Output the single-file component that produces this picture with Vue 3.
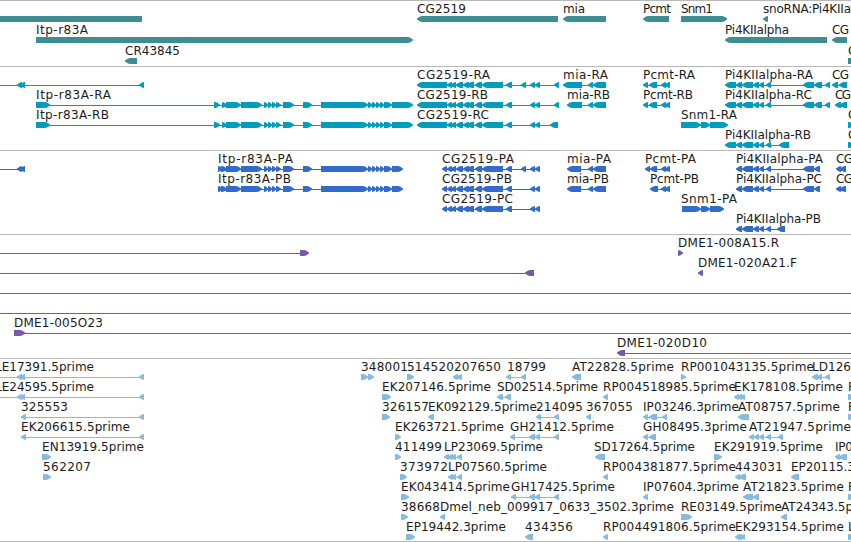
<template>
  <div class="browser">
    <section v-for="track in tracks" :key="track.name" :class="['track', track.name]">
      <svg class="canvas" width="851" :height="track.height">
        <g
          v-for="(item, index) in track.items"
          :key="index"
          :transform="`translate(0 ${item.row * track.pitch})`"
        >
          <rect v-if="item.line" class="intron" :x="item.line[0]" y="18" :width="item.line[1] - item.line[0]" height="1" />
          <path class="exon" :d="item.path" />
          <text v-if="item.label" class="label" :x="item.x" y="12" :textLength="item.length">{{ item.label }}</text>
        </g>
      </svg>
    </section>
  </div>
</template>

<script setup>
const HEAD = 5

// one exon: a box with a blunt pointed end on the side of its strand
const exonPath = (start, end, strand) => {
  const head = Math.min(HEAD, end - start)
  if (strand === '-') {
    return `M${start} 17.6L${start + head - 2} 15.6L${start + head} 15H${end}V21H${start + head}L${start + head - 2} 20.4L${start} 18.4Z`
  }
  if (strand === '+') {
    return `M${start} 15H${end - head}L${end - head + 2} 15.6L${end} 17.6V18.4L${end - head + 2} 20.4L${end - head} 21H${start}Z`
  }
  return `M${start} 15H${end}V21H${start}Z`
}

// labelEnd 0 keeps the natural width of the label
const feature = (row, label, x, labelEnd, strand, exonText, line) => {
  const exons = exonText ? exonText.split(' ').map(e => e.split('_').map(Number)) : []
  const auto = exons.length > 1 ? [exons[0][0] + 2, exons[exons.length - 1][1] - 1] : null
  return {
    row,
    label,
    x,
    length: labelEnd ? labelEnd - x : null,
    line: line || auto,
    path: exons.map(([start, end]) => exonPath(start, end, strand)).join('')
  }
}

const itpMiddle = '226_241 241_262 264_268 268_272 272_276 276_281 283_294 303_312 321_368 368_372 372_376 376_380 380_384 384_392'
const itpRna = `36_50 214_220 222_227 ${itpMiddle} 392_413`
const itpProtein = `218_222 221_227 ${itpMiddle} 392_403`
const cgMiddle = '447_452 451_456 456_463 463_469 467_474 475_482 482_503 506_512'
const piMiddle = '736_742 742_753 753_759 759_764 766_771'

const genes = [
  feature(0, '', 0, 0, '', '0_142'),
  feature(0, 'CG2519', 417, 466, '-', '417_558'),
  feature(0, 'mia', 563, 585, '-', '563_606'),
  feature(0, 'Pcmt', 643, 671, '-', '643_669'),
  feature(0, 'Snm1', 681, 713, '+', '681_727'),
  feature(0, 'snoRNA:Pi4KIIa', 763, 851, '-', '763_768'),
  feature(1, 'Itp-r83A', 36, 88, '+', '36_413'),
  feature(1, 'Pi4KIIalpha', 725, 789, '-', '725_827'),
  feature(1, 'CG', 832, 849, '-', '832_847'),
  feature(2, 'CR43845', 125, 180, '-', '125_137'),
  feature(2, 'C', 848, 0, '', '848_851')
]

const transcripts = [
  feature(0, '', 0, 0, '-', '17_22 20_25 139_144', [0, 142]),
  feature(0, 'CG2519-RA', 417, 490, '-', `417_447 ${cgMiddle} 521_526 530_535 535_540 554_559`),
  feature(0, 'mia-RA', 563, 608, '-', '563_582 588_593 593_606'),
  feature(0, 'Pcmt-RA', 643, 695, '-', '643_648 649_657 661_666 665_670'),
  feature(0, 'Pi4KIIalpha-RA', 725, 813, '-', `725_736 ${piMiddle} 803_814 814_822 825_830`),
  feature(0, 'CG', 832, 849, '-', '832_838 839_847'),
  feature(1, 'Itp-r83A-RA', 36, 111, '+', itpRna),
  feature(1, 'CG2519-RB', 417, 488, '-', `417_447 ${cgMiddle} 530_535 535_540 554_559`),
  feature(1, 'mia-RB', 567, 610, '-', '567_582 588_593 593_606'),
  feature(1, 'Pcmt-RB', 643, 693, '-', '643_648 649_657 661_666 665_670'),
  feature(1, 'Pi4KIIalpha-RC', 725, 812, '-', `725_736 ${piMiddle} 803_814 814_822 825_830`),
  feature(1, 'CG', 835, 851, '-', '835_841 840_847'),
  feature(2, 'Itp-r83A-RB', 36, 109, '+', itpRna),
  feature(2, 'CG2519-RC', 417, 489, '-', `417_447 ${cgMiddle} 530_535 535_540 550_558`),
  feature(2, 'Snm1-RA', 681, 737, '+', '681_701 701_710 710_728'),
  feature(2, 'C', 848, 0, '+', '848_854'),
  feature(3, 'Pi4KIIalpha-RB', 725, 811, '-', `725_736 ${piMiddle} 779_789`),
  feature(3, 'C', 848, 0, '+', '848_854')
]

const proteins = [
  feature(0, '', 0, 0, '-', '17_22 20_25', [0, 24]),
  feature(0, 'Itp-r83A-PA', 218, 293, '+', itpProtein),
  feature(0, 'CG2519-PA', 442, 514, '-', `442_447 ${cgMiddle} 521_526 530_535 535_540`),
  feature(0, 'mia-PA', 567, 611, '-', '567_581 588_593 593_606'),
  feature(0, 'Pcmt-PA', 645, 696, '-', '645_650 650_657 661_666 665_670'),
  feature(0, 'Pi4KIIalpha-PA', 736, 823, '-', `${piMiddle} 803_814 814_820`),
  feature(0, 'CG', 836, 853, '-', '836_841 840_846'),
  feature(1, 'Itp-r83A-PB', 218, 291, '+', itpProtein),
  feature(1, 'CG2519-PB', 442, 512, '-', `442_447 ${cgMiddle} 530_535 535_540`),
  feature(1, 'mia-PB', 567, 609, '-', '567_581 588_593 593_606'),
  feature(1, 'Pcmt-PB', 650, 699, '-', '650_658 661_666 665_670'),
  feature(1, 'Pi4KIIalpha-PC', 736, 822, '-', `${piMiddle} 803_814 814_820`),
  feature(1, 'CG', 836, 853, '-', '836_841 840_846'),
  feature(2, 'CG2519-PC', 442, 513, '-', `442_447 ${cgMiddle} 530_535 535_540`),
  feature(2, 'Snm1-PA', 681, 737, '+', '682_701 701_710 710_724'),
  feature(3, 'Pi4KIIalpha-PB', 736, 821, '-', `${piMiddle} 777_785`)
]

const clones = [
  feature(0, '', 0, 0, '+', '300_309', [0, 302]),
  feature(0, 'DME1-008A15.R', 678, 779, '+', '678_683'),
  feature(1, '', 0, 0, '-', '525_534', [0, 530]),
  feature(1, 'DME1-020A21.F', 698, 797, '-', '698_703'),
  feature(2, '', 0, 0, '', '', [0, 851]),
  feature(3, '', 0, 0, '', '', [0, 851]),
  feature(4, 'DME1-005O23', 14, 103, '+', '14_25', [20, 851]),
  feature(5, 'DME1-020D10', 617, 707, '-', '617_625', [620, 851])
]

const ests = [
  feature(0, 'LE17391.5prime', -5, 94, '-', '17_22 20_25 139_144', [0, 142]),
  feature(0, '348001', 361, 408, '+', '361_368 368_374'),
  feature(0, '514520', 407, 454, '+', '407_414'),
  feature(0, '207650', 454, 501, '-', '453_458 457_462'),
  feature(0, '18799', 507, 546, '-', '506_511 521_526'),
  feature(0, 'AT22828.5prime', 572, 674, '-', '572_581'),
  feature(0, 'RP001043135.5prime', 681, 814, '+', '681_686'),
  feature(0, 'LD126', 812, 851, '-', '812_818 817_822 825_830'),
  feature(1, 'LE24595.5prime', -5, 94, '-', '17_22 20_25 139_144', [0, 142]),
  feature(1, 'EK207146.5prime', 382, 491, '+', '382_391'),
  feature(1, 'SD02514.5prime', 497, 598, '-', '497_503 505_511'),
  feature(1, 'RP004518985.5prime', 603, 736, '-', '603_608'),
  feature(1, 'EK178108.5prime', 734, 843, '-', '734_739 738_742 741_745'),
  feature(1, 'R', 848, 0, '+', '848_854'),
  feature(2, '325553', 21, 68, '-', '21_26 139_144'),
  feature(2, '326157', 382, 429, '+', '382_390'),
  feature(2, 'EK092129.5prime', 428, 537, '-', '428_434'),
  feature(2, '214095', 536, 583, '-', '536_541 554_559'),
  feature(2, '367055', 586, 633, '-', '586_591'),
  feature(2, 'IP03246.3prime', 643, 739, '-', '643_648 649_657 662_667'),
  feature(2, 'AT08757.5prime', 738, 840, '-', '738_749'),
  feature(2, 'R', 848, 0, '+', '848_854'),
  feature(3, 'EK206615.5prime', 21, 130, '-', '21_26 139_144'),
  feature(3, 'EK263721.5prime', 395, 504, '+', '395_401'),
  feature(3, 'GH21412.5prime', 510, 614, '-', '510_515 529_535 535_540 554_559'),
  feature(3, 'GH08495.3prime', 643, 747, '-', '643_648 649_656'),
  feature(3, 'AT21947.5prime', 749, 851, '-', '749_754 754_759 759_764 766_771 778_783'),
  feature(4, 'EN13919.5prime', 42, 144, '+', '42_51'),
  feature(4, '411499', 395, 442, '+', '395_401'),
  feature(4, 'LP23069.5prime', 444, 543, '-', '444_449 448_453 452_456 457_462'),
  feature(4, 'SD17264.5prime', 594, 695, '-', '595_605'),
  feature(4, 'EK291919.5prime', 714, 823, '+', '714_722'),
  feature(4, 'IP0', 835, 853, '-', '835_840 839_847'),
  feature(5, '562207', 43, 91, '+', '43_51'),
  feature(5, '373972', 400, 448, '+', '400_407'),
  feature(5, 'LP07560.5prime', 448, 547, '-', '448_453 452_456 457_462'),
  feature(5, 'RP004381877.5prime', 603, 736, '-', '603_608'),
  feature(5, '443031', 735, 783, '-', '735_740 739_746'),
  feature(5, 'EP20115.3', 791, 855, '-', '791_799'),
  feature(6, 'EK043414.5prime', 401, 510, '+', '401_409'),
  feature(6, 'GH17425.5prime', 511, 615, '-', '511_516 529_535 535_540 554_559'),
  feature(6, 'IP07604.3prime', 643, 739, '-', '643_648'),
  feature(6, 'AT21823.5prime', 743, 844, '-', '743_753 753_759'),
  feature(6, 'R', 848, 0, '+', '848_854'),
  feature(7, '38668', 401, 440, '+', '401_408'),
  feature(7, 'Dmel_neb_009917_0633_3502.3prime', 440, 674, '-', '440_445'),
  feature(7, 'RE03149.5prime', 681, 782, '+', '681_692'),
  feature(7, 'AT24343.5p', 781, 853, '-', '781_787'),
  feature(8, 'EP19442.3prime', 406, 506, '+', '406_415'),
  feature(8, '434356', 525, 573, '-', '525_533'),
  feature(8, 'RP004491806.5prime', 603, 736, '-', '603_608'),
  feature(8, 'EK293154.5prime', 735, 844, '-', '735_740 738_742 741_745'),
  feature(8, 'L', 848, 0, '+', '848_854')
]

const tracks = [
  { name: 'genes', height: 65, pitch: 21, items: genes },
  { name: 'transcripts', height: 83, pitch: 20, items: transcripts },
  { name: 'proteins', height: 83, pitch: 20, items: proteins },
  { name: 'clones', height: 123, pitch: 20, items: clones },
  { name: 'ests', height: 182, pitch: 20, items: ests }
]
</script>

<style scoped>
.browser {
  width: 851px;
  height: 542px;
  box-sizing: border-box;
  overflow: hidden;
  background: #fff;
  border-bottom: 1px solid #b8b8b8;
}

.track {
  border-top: 1px solid #b8b8b8;
}

.canvas {
  display: block;
  overflow: hidden;
}

.label {
  font-family: "DejaVu Sans", sans-serif;
  font-size: 12px;
  fill: #1c1c1c;
}

.genes {
  fill: #3d8e93;
}

.transcripts {
  fill: #009bbd;
}

.proteins {
  fill: #316ccb;
}

.clones {
  fill: #7859a8;
}

.ests {
  fill: #87bbdd;
}
</style>
